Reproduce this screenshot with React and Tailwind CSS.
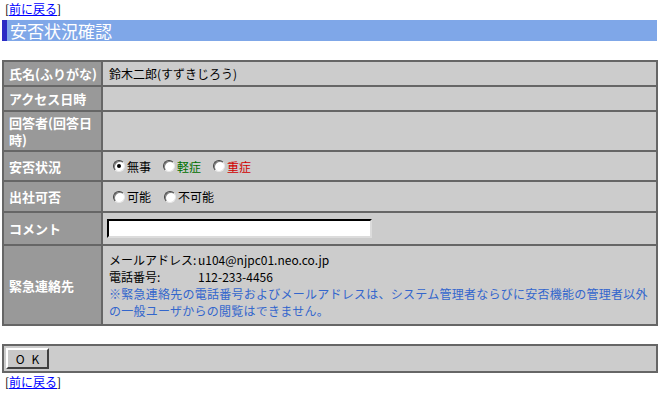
import React from "react";

function BackLink() {
    return (
        <div className="h-[17px] pl-[3px] text-[12px] leading-[17px] text-black">
            [<a href="#" className="text-[#0000ff] underline">前に戻る</a>]
        </div>
    );
}

function Radio({ checked }) {
    return (
        <span className="relative inline-block h-[12px] w-[12px] shrink-0 rounded-full border border-t-[#404040] border-l-[#404040] border-r-[#e8e8e8] border-b-[#e8e8e8] bg-white shadow-[inset_1px_1px_0_#808080]">
            {checked && (
                <span className="absolute left-[3px] top-[3px] h-[4px] w-[4px] rounded-full bg-black" />
            )}
        </span>
    );
}

function Choice({ checked, label, color }) {
    return (
        <span className="flex items-center">
            <Radio checked={checked} />
            <span className={"ml-[2px] " + (color || "text-black")}>{label}</span>
        </span>
    );
}

function Row({ label, height, first, children, valueClass }) {
    return (
        <div
            className={
                "flex " + (first ? "" : "border-t-2 border-[#666666] ") + height
            }
        >
            <div className="flex w-[99px] shrink-0 items-center border-r-2 border-[#666666] bg-[#999999] pl-[5px] text-[13px] font-bold leading-[17px] text-white">
                {label}
            </div>
            <div
                className={
                    "flex flex-1 items-center bg-[#cccccc] text-[12px] leading-[17px] text-black " +
                    (valueClass || "pl-[6px]")
                }
            >
                {children}
            </div>
        </div>
    );
}

export default function App() {
    return (
        <div className="h-[393px] w-[660px] overflow-hidden bg-white px-[2px] font-['Noto_Sans_CJK_JP',sans-serif]">
            <BackLink />

            <div className="mt-[3px] h-[21px] w-[655px] border-l-[5px] border-[#2b2bc4] bg-[#7fa7e8] pl-[3px] text-[17px] leading-[21px] text-white">
                安否状況確認
            </div>

            <div className="mt-[19px] w-[656px] border-2 border-[#666666]">
                <Row label="氏名(ふりがな)" height="h-[23px]" first>
                    鈴木二郎(すずきじろう)
                </Row>
                <Row label="アクセス日時" height="h-[25px]" />
                <Row
                    label={
                        <span>
                            回答者(回答日
                            <br />
                            時)
                        </span>
                    }
                    height="h-[40px]"
                />
                <Row label="安否状況" height="h-[30px]" valueClass="pl-[10px]">
                    <div className="flex items-center gap-[12px]">
                        <Choice checked label="無事" />
                        <Choice label="軽症" color="text-[#007000]" />
                        <Choice label="重症" color="text-[#d00000]" />
                    </div>
                </Row>
                <Row label="出社可否" height="h-[31px]" valueClass="pl-[10px]">
                    <div className="flex items-center gap-[13px]">
                        <Choice label="可能" />
                        <Choice label="不可能" />
                    </div>
                </Row>
                <Row label="コメント" height="h-[33px]" valueClass="pl-[4px]">
                    <input
                        type="text"
                        className="-mt-[1px] h-[19px] w-[265px] border-2 border-t-black border-l-black border-r-[#dcdcdc] border-b-[#dcdcdc] bg-white px-1 text-[12px] outline-none"
                    />
                </Row>
                <Row label="緊急連絡先" height="h-[80px]">
                    <div className="flex flex-col">
                        <div className="grid grid-cols-[89px_auto]">
                            <span>メールアドレス:</span>
                            <span>u104@njpc01.neo.co.jp</span>
                            <span>電話番号:</span>
                            <span>112-233-4456</span>
                        </div>
                        <div className="whitespace-nowrap tracking-[0.25px] text-[#3366cc]">
                            ※緊急連絡先の電話番号およびメールアドレスは、システム管理者ならびに安否機能の管理者以外
                            <br />
                            の一般ユーザからの閲覧はできません。
                        </div>
                    </div>
                </Row>
            </div>

            <div className="mt-[18px] w-[656px] border-2 border-[#666666] bg-[#cccccc] p-[2px]">
                <button
                    type="button"
                    className="flex h-[21px] w-[43px] items-center justify-center gap-[7px] border-2 border-t-white border-l-white border-r-[#404040] border-b-[#404040] bg-[#c8c8c8] text-[12px] leading-[17px] text-black"
                >
                    <span>O</span>
                    <span>K</span>
                </button>
            </div>

            <BackLink />
        </div>
    );
}
